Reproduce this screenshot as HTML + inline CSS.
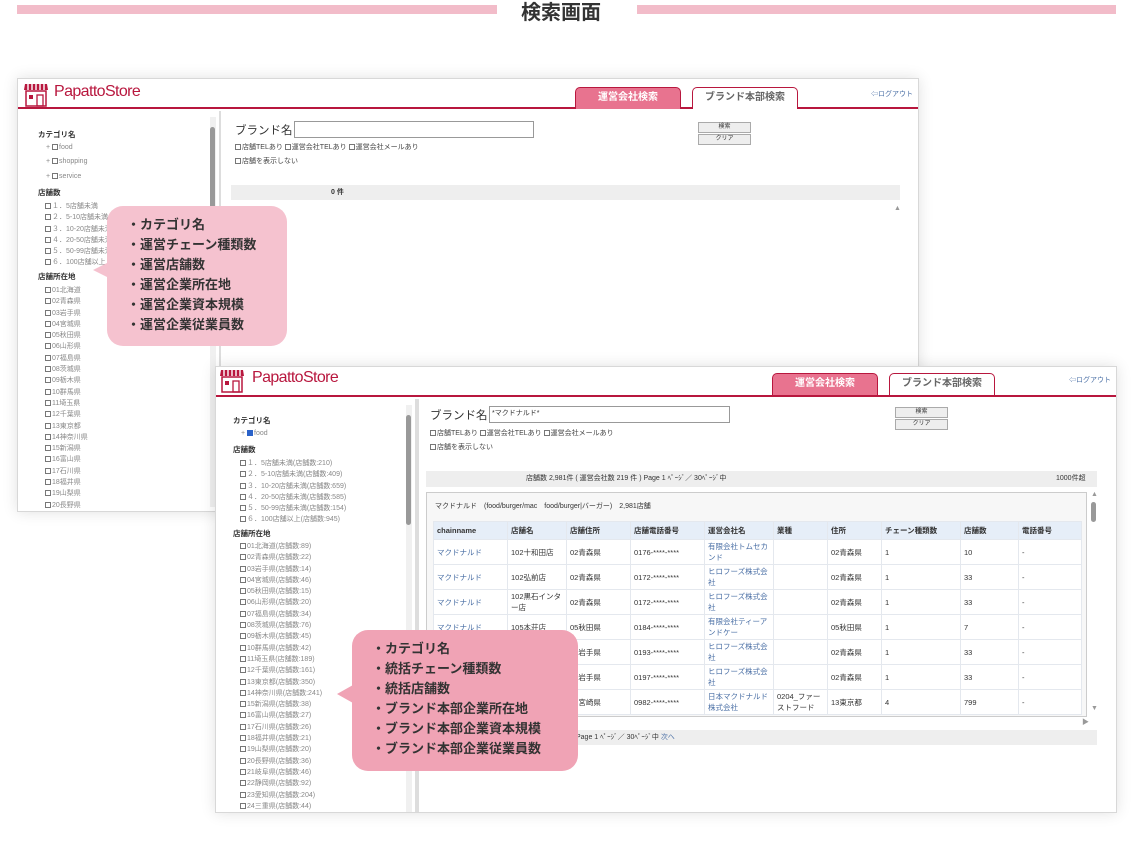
<!DOCTYPE html>
<html><head><meta charset="utf-8"><style>
*{margin:0;padding:0;box-sizing:border-box}
body{width:1148px;height:845px;background:#fff;position:relative;overflow:hidden;font-family:"Liberation Sans","Noto Sans CJK JP",sans-serif;color:#333}
.a{position:absolute;white-space:nowrap}
.win{position:absolute;background:#fff;border:1px solid #d8d8d8;box-shadow:0 0 14px rgba(0,0,0,.12);overflow:hidden}
.hdr{position:absolute;left:0;top:0;right:0;height:30px;border-bottom:2px solid #b8173e}
.logo{position:absolute;left:36px;top:4px;font-size:16px;color:#b8173e;letter-spacing:-.6px;font-family:"Liberation Sans",sans-serif}
.tab{position:absolute;top:8px;height:22px;border:1.5px solid #b8173e;border-bottom:none;border-radius:5px 5px 0 0;font-size:10px;font-weight:bold;text-align:center;line-height:20px}
.t1{background:#e8738f;color:#fff}
.t2{background:#fff;color:#666}
.sb{font-size:7px;color:#888}
.sbh{font-size:7.5px;font-weight:bold;color:#333}
.cb{display:inline-block;width:6px;height:6px;border:1px solid #777;margin-right:1px;vertical-align:-1px}
.bubble{position:absolute;border-radius:16px;font-size:13px;font-weight:bold;color:#333;line-height:20px;padding:9px 0 0 20px}
table{border-collapse:collapse;font-size:7.5px;table-layout:fixed}
td{border:1px solid #e4e8ee;padding:0 3px;height:25px;vertical-align:middle;line-height:11px;white-space:normal;word-break:break-all}
th{background:#e6eef8;border:1px solid #e4e8ee;height:18px;text-align:left;padding:0 3px;font-weight:bold;white-space:nowrap;overflow:hidden}
.lk{color:#4a6fa5}
.bl{font-size:11.5px;color:#333}
</style></head><body>

<div class="a" style="left:17px;top:5px;width:480px;height:9px;background:#f2bcc9"></div>
<div class="a" style="left:637px;top:5px;width:479px;height:9px;background:#f2bcc9"></div>
<div class="a" style="left:521px;top:0px;font-size:20px;font-weight:bold;color:#333;line-height:26px">検索画面</div>

<!-- window 1 -->
<div class="win" style="left:17px;top:78px;width:902px;height:434px">
 <div class="hdr">
  <svg class="a" style="left:5px;top:3px" width="26" height="25" viewBox="0 0 26 25"><path d="M2 2h22l1 6H1z" fill="#b8173e"/><path d="M5 2v6M9 2v6M13 2v6M17 2v6M21 2v6" stroke="#fff" stroke-width="1.4"/><rect x="3" y="9" width="20" height="15" fill="none" stroke="#b8173e" stroke-width="1.5"/><rect x="14" y="13" width="6" height="11" fill="none" stroke="#b8173e" stroke-width="1.3"/><rect x="6" y="13" width="4" height="4" fill="#b8173e"/></svg>
  <div class="logo">PapattoStore</div>
  <div class="tab t1" style="left:557px;width:106px">運営会社検索</div>
  <div class="tab t2" style="left:674px;width:106px">ブランド本部検索</div>
  <div class="a" style="left:853px;top:10px;font-size:7px;color:#4a6fa5">⇦ログアウト</div>
 </div>
 <div class="a" style="left:192px;top:38px;width:6px;height:390px;background:#f0f0f0"></div>
 <div class="a" style="left:192px;top:48px;width:5px;height:130px;background:#999;border-radius:3px"></div>
 <div class="a" style="left:201px;top:32px;width:2px;height:402px;background:#ddd"></div>
 <div class="a sbh" style="left:20px;top:50px">カテゴリ名</div>
 <div class="a sb" style="left:28px;top:65px">+ <span class="cb"></span>food</div>
 <div class="a sb" style="left:28px;top:79px">+ <span class="cb"></span>shopping</div>
 <div class="a sb" style="left:28px;top:94px">+ <span class="cb"></span>service</div>
 <div class="a sbh" style="left:20px;top:108px">店舗数</div>
 <div class="a sb" style="left:27px;top:122px;line-height:11.3px"><span class="cb"></span>１．5店舗未満<br><span class="cb"></span>２．5-10店舗未満<br><span class="cb"></span>３．10-20店舗未満<br><span class="cb"></span>４．20-50店舗未満<br><span class="cb"></span>５．50-99店舗未満<br><span class="cb"></span>６．100店舗以上</div>
 <div class="a sbh" style="left:20px;top:192px">店舗所在地</div>
 <div class="a sb" style="left:27px;top:206px;line-height:11.3px"><span class="cb"></span>01北海道<br><span class="cb"></span>02青森県<br><span class="cb"></span>03岩手県<br><span class="cb"></span>04宮城県<br><span class="cb"></span>05秋田県<br><span class="cb"></span>06山形県<br><span class="cb"></span>07福島県<br><span class="cb"></span>08茨城県<br><span class="cb"></span>09栃木県<br><span class="cb"></span>10群馬県<br><span class="cb"></span>11埼玉県<br><span class="cb"></span>12千葉県<br><span class="cb"></span>13東京都<br><span class="cb"></span>14神奈川県<br><span class="cb"></span>15新潟県<br><span class="cb"></span>16富山県<br><span class="cb"></span>17石川県<br><span class="cb"></span>18福井県<br><span class="cb"></span>19山梨県<br><span class="cb"></span>20長野県</div>
 <div class="a bl" style="left:217px;top:43px">ブランド名</div>
 <div class="a" style="left:276px;top:42px;width:240px;height:17px;border:1px solid #999"></div>
 <div class="a sb" style="left:217px;top:63px;color:#444"><span class="cb"></span>店舗TELあり <span class="cb"></span>運営会社TELあり <span class="cb"></span>運営会社メールあり</div>
 <div class="a sb" style="left:217px;top:77px;color:#444"><span class="cb"></span>店舗を表示しない</div>
 <div class="a" style="left:680px;top:43px;width:53px;height:11px;border:1px solid #aaa;background:#eee;font-size:6px;text-align:center;line-height:9px">検索</div>
 <div class="a" style="left:680px;top:55px;width:53px;height:11px;border:1px solid #aaa;background:#eee;font-size:6px;text-align:center;line-height:9px">クリア</div>
 <div class="a" style="left:213px;top:106px;width:669px;height:15px;background:#eee;font-size:7px;font-weight:bold;line-height:15px;padding-left:100px">0 件</div>
 <div class="a" style="left:876px;top:126px;font-size:7px;color:#999">▲</div>
</div>

<div class="bubble" style="left:107px;top:206px;width:180px;height:140px;background:#f5c2cf">・カテゴリ名<br>・運営チェーン種類数<br>・運営店舗数<br>・運営企業所在地<br>・運営企業資本規模<br>・運営企業従業員数</div>
<div class="a" style="left:93px;top:262px;width:0;height:0;border-top:8px solid transparent;border-bottom:8px solid transparent;border-right:16px solid #f5c2cf"></div>

<!-- window 2 -->
<div class="win" style="left:215px;top:366px;width:902px;height:447px">
 <div class="hdr">
  <svg class="a" style="left:3px;top:1px" width="26" height="25" viewBox="0 0 26 25"><path d="M2 2h22l1 6H1z" fill="#b8173e"/><path d="M5 2v6M9 2v6M13 2v6M17 2v6M21 2v6" stroke="#fff" stroke-width="1.4"/><rect x="3" y="9" width="20" height="15" fill="none" stroke="#b8173e" stroke-width="1.5"/><rect x="14" y="13" width="6" height="11" fill="none" stroke="#b8173e" stroke-width="1.3"/><rect x="6" y="13" width="4" height="4" fill="#b8173e"/></svg>
  <div class="logo" style="left:36px;top:2px">PapattoStore</div>
  <div class="tab t1" style="left:556px;top:6px;width:106px">運営会社検索</div>
  <div class="tab t2" style="left:673px;top:6px;width:106px">ブランド本部検索</div>
  <div class="a" style="left:853px;top:8px;font-size:7px;color:#4a6fa5">⇦ログアウト</div>
 </div>
 <div class="a" style="left:190px;top:38px;width:6px;height:410px;background:#f0f0f0"></div>
 <div class="a" style="left:190px;top:48px;width:5px;height:110px;background:#999;border-radius:3px"></div>
 <div class="a" style="left:199px;top:32px;width:4px;height:415px;background:#ddd"></div>
 <div class="a sbh" style="left:17px;top:48px">カテゴリ名</div>
 <div class="a sb" style="left:25px;top:63px">+ <span class="cb" style="background:#2a62c9;border-color:#2a62c9"></span>food</div>
 <div class="a sbh" style="left:17px;top:77px">店舗数</div>
 <div class="a sb" style="left:24px;top:91px;line-height:11.3px"><span class="cb"></span>１．5店舗未満(店舗数:210)<br><span class="cb"></span>２．5-10店舗未満(店舗数:409)<br><span class="cb"></span>３．10-20店舗未満(店舗数:659)<br><span class="cb"></span>４．20-50店舗未満(店舗数:585)<br><span class="cb"></span>５．50-99店舗未満(店舗数:154)<br><span class="cb"></span>６．100店舗以上(店舗数:945)</div>
 <div class="a sbh" style="left:17px;top:161px">店舗所在地</div>
 <div class="a sb" style="left:24px;top:174px;line-height:11.3px"><span class="cb"></span>01北海道(店舗数:89)<br><span class="cb"></span>02青森県(店舗数:22)<br><span class="cb"></span>03岩手県(店舗数:14)<br><span class="cb"></span>04宮城県(店舗数:46)<br><span class="cb"></span>05秋田県(店舗数:15)<br><span class="cb"></span>06山形県(店舗数:20)<br><span class="cb"></span>07福島県(店舗数:34)<br><span class="cb"></span>08茨城県(店舗数:76)<br><span class="cb"></span>09栃木県(店舗数:45)<br><span class="cb"></span>10群馬県(店舗数:42)<br><span class="cb"></span>11埼玉県(店舗数:189)<br><span class="cb"></span>12千葉県(店舗数:161)<br><span class="cb"></span>13東京都(店舗数:350)<br><span class="cb"></span>14神奈川県(店舗数:241)<br><span class="cb"></span>15新潟県(店舗数:38)<br><span class="cb"></span>16富山県(店舗数:27)<br><span class="cb"></span>17石川県(店舗数:26)<br><span class="cb"></span>18福井県(店舗数:21)<br><span class="cb"></span>19山梨県(店舗数:20)<br><span class="cb"></span>20長野県(店舗数:36)<br><span class="cb"></span>21岐阜県(店舗数:46)<br><span class="cb"></span>22静岡県(店舗数:92)<br><span class="cb"></span>23愛知県(店舗数:204)<br><span class="cb"></span>24三重県(店舗数:44)</div>
 <div class="a bl" style="left:214px;top:40px">ブランド名</div>
 <div class="a" style="left:273px;top:39px;width:241px;height:17px;border:1px solid #999;font-size:7px;padding:1px 2px">*マクドナルド*</div>
 <div class="a sb" style="left:214px;top:61px;color:#444"><span class="cb"></span>店舗TELあり <span class="cb"></span>運営会社TELあり <span class="cb"></span>運営会社メールあり</div>
 <div class="a sb" style="left:214px;top:75px;color:#444"><span class="cb"></span>店舗を表示しない</div>
 <div class="a" style="left:679px;top:40px;width:53px;height:11px;border:1px solid #aaa;background:#eee;font-size:6px;text-align:center;line-height:9px">検索</div>
 <div class="a" style="left:679px;top:52px;width:53px;height:11px;border:1px solid #aaa;background:#eee;font-size:6px;text-align:center;line-height:9px">クリア</div>
 <div class="a" style="left:210px;top:104px;width:671px;height:16px;background:#eee;font-size:7px;line-height:16px"><span class="a" style="left:100px">店舗数 2,981件 ( 運営会社数 219 件 ) Page 1 ﾍﾟｰｼﾞ／ 30ﾍﾟｰｼﾞ中</span><span class="a" style="left:630px">1000件超</span></div>
 <div class="a" style="left:210px;top:125px;width:661px;height:225px;border:1px solid #ccc;background:#f7f7f7;overflow:hidden">
  <div class="a" style="left:8px;top:8px;font-size:7px">マクドナルド　(food/burger/mac　food/burger|バーガー)　2,981店舗</div>
  <table class="a" style="left:6px;top:28px;width:648px;background:#fff">
   <colgroup><col style="width:74px"><col style="width:59px"><col style="width:64px"><col style="width:74px"><col style="width:69px"><col style="width:54px"><col style="width:54px"><col style="width:79px"><col style="width:58px"><col style="width:63px"></colgroup>
   <tr><th>chainname</th><th>店舗名</th><th>店舗住所</th><th>店舗電話番号</th><th>運営会社名</th><th>業種</th><th>住所</th><th>チェーン種類数</th><th>店舗数</th><th>電話番号</th></tr>
   <tr><td class="lk">マクドナルド</td><td>102十和田店</td><td>02青森県</td><td>0176-****-****</td><td class="lk">有限会社トムセカンド</td><td></td><td>02青森県</td><td>1</td><td>10</td><td>-</td></tr>
   <tr><td class="lk">マクドナルド</td><td>102弘前店</td><td>02青森県</td><td>0172-****-****</td><td class="lk">ヒロフーズ株式会社</td><td></td><td>02青森県</td><td>1</td><td>33</td><td>-</td></tr>
   <tr><td class="lk">マクドナルド</td><td>102黒石インター店</td><td>02青森県</td><td>0172-****-****</td><td class="lk">ヒロフーズ株式会社</td><td></td><td>02青森県</td><td>1</td><td>33</td><td>-</td></tr>
   <tr><td class="lk">マクドナルド</td><td>105本荘店</td><td>05秋田県</td><td>0184-****-****</td><td class="lk">有限会社ティーアンドケー</td><td></td><td>05秋田県</td><td>1</td><td>7</td><td>-</td></tr>
   <tr><td class="lk">マクドナルド</td><td></td><td>03岩手県</td><td>0193-****-****</td><td class="lk">ヒロフーズ株式会社</td><td></td><td>02青森県</td><td>1</td><td>33</td><td>-</td></tr>
   <tr><td class="lk">マクドナルド</td><td></td><td>03岩手県</td><td>0197-****-****</td><td class="lk">ヒロフーズ株式会社</td><td></td><td>02青森県</td><td>1</td><td>33</td><td>-</td></tr>
   <tr><td class="lk">マクドナルド</td><td></td><td>45宮崎県</td><td>0982-****-****</td><td class="lk">日本マクドナルド株式会社</td><td>0204_ファーストフード</td><td>13東京都</td><td>4</td><td>799</td><td>-</td></tr>
  </table>
 </div>
 <div class="a" style="left:875px;top:124px;font-size:7px;color:#999">▲</div>
 <div class="a" style="left:875px;top:135px;width:5px;height:20px;background:#999;border-radius:3px"></div>
 <div class="a" style="left:875px;top:338px;font-size:7px;color:#999">▼</div>
 <div class="a" style="left:866px;top:350px;font-size:7px;color:#999">▶</div>
 <div class="a" style="left:210px;top:363px;width:671px;height:15px;background:#eee;font-size:7px;line-height:15px;padding-left:150px">Page 1 ﾍﾟｰｼﾞ／ 30ﾍﾟｰｼﾞ中 <span class="lk">次へ</span></div>
</div>

<div class="bubble" style="left:352px;top:630px;width:226px;height:141px;background:#f0a3b5">・カテゴリ名<br>・統括チェーン種類数<br>・統括店舗数<br>・ブランド本部企業所在地<br>・ブランド本部企業資本規模<br>・ブランド本部企業従業員数</div>
<div class="a" style="left:337px;top:685px;width:0;height:0;border-top:9px solid transparent;border-bottom:9px solid transparent;border-right:16px solid #f0a3b5"></div>

</body></html>
